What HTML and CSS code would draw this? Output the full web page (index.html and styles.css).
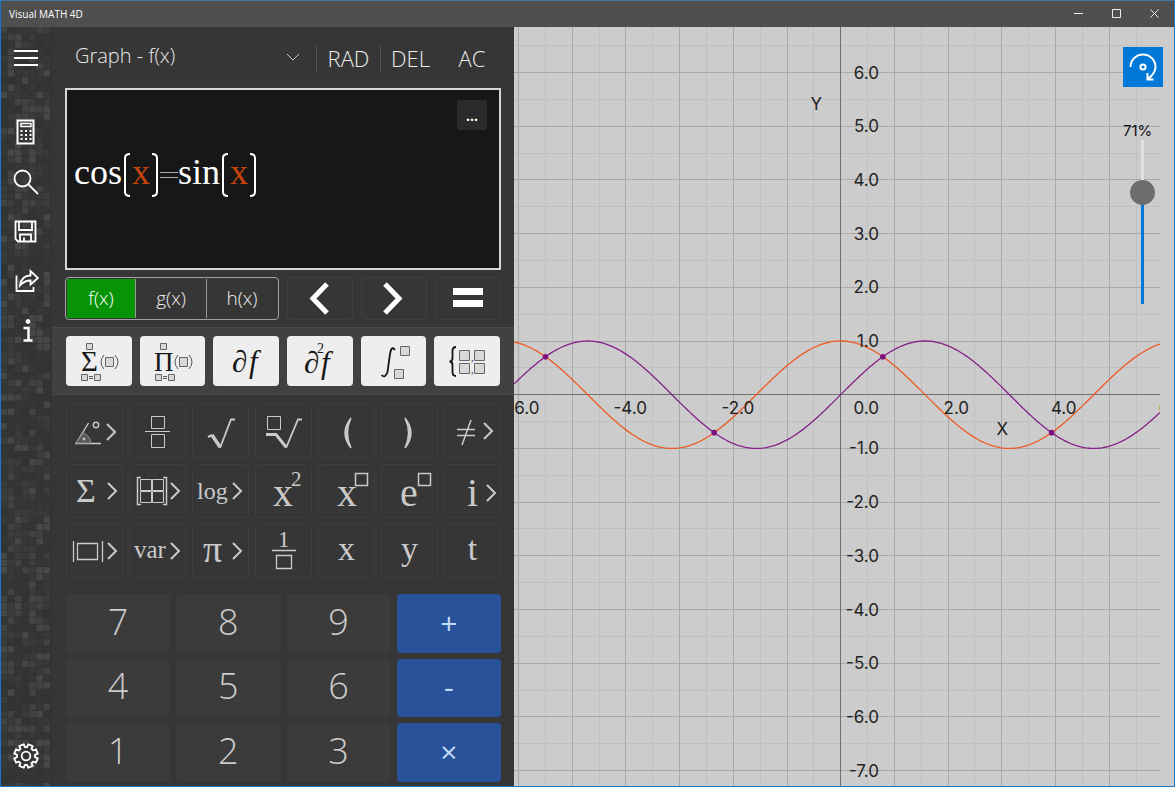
FILE: index.html
```html
<!DOCTYPE html>
<html lang="en">

<head>
    <meta charset="UTF-8">
    <meta name="viewport" content="width=device-width, initial-scale=1.0">
    <title>Visual MATH 4D</title>
    <link rel="stylesheet" href="styles.css">
</head>

<body>
    <header class="titlebar">
        <span class="title">Visual MATH 4D</span>
        <button class="winButton" aria-label="Minimize"><svg width="12" height="12"><path d="M1 5.500H10" /></svg></button>
        <button class="winButton" aria-label="Maximize"><svg width="12" height="12"><path d="M1.500 1.500H9.500V9.500H1.500Z" /></svg></button>
        <button class="winButton" aria-label="Close"><svg width="12" height="12"><path d="M1.500 1.500L9.500 9.500M9.500 1.500L1.500 9.500" /></svg></button>
    </header>

    <div class="window">
        <nav class="sidebar">
            <svg class="mosaic" id="mosaic" aria-hidden="true"></svg>
            <button class="sideButton menuButton" aria-label="Menu">
                <svg width="26" height="26"><path d="M1 6H25M1 13H25M1 20H25" stroke-width="2" /></svg>
            </button>
            <button class="sideButton" aria-label="Calculator">
                <svg width="26" height="26">
                    <path d="M4.500 1.500H20.500V24.500H4.500Z" stroke-width="2" />
                    <path d="M8 4.500H18V7.500H8Z" stroke-width="1.500" />
                    <path d="M7.500 12H18.500M7.500 16H18.500M7.500 20H18.500" stroke-width="2" stroke-dasharray="2 2.500" />
                </svg>
            </button>
            <button class="sideButton" aria-label="Search">
                <svg width="26" height="26"><circle cx="9.500" cy="9.500" r="8" stroke-width="1.800" /><path d="M15.500 15.500L25 25" stroke-width="1.800" /></svg>
            </button>
            <button class="sideButton" aria-label="Save">
                <svg width="26" height="26">
                    <path d="M2.500 2.500H22.500V22.500H5L2.500 20Z" stroke-width="1.800" />
                    <path d="M6 3V11H19V3M7 22V15.500H18V22M11 22V18.500" stroke-width="1.800" />
                </svg>
            </button>
            <button class="sideButton" aria-label="Share">
                <svg width="26" height="26">
                    <path d="M3.500 6.500V22H20.500V18" stroke-width="1.800" />
                    <path d="M7 16.500C8 10 12 6.500 17.500 6.500V2L25 9L17.500 15.500V11.500C13 11.500 10 13 7 16.500Z" stroke-width="1.800" />
                </svg>
            </button>
            <button class="sideButton" aria-label="Info">
                <svg width="26" height="26"><circle class="solid" cx="15" cy="2.500" r="2" /><path d="M10.500 9H15.500V21M10.500 21.500H19.500" stroke-width="2.500" /></svg>
            </button>
            <button class="sideButton settingsButton" aria-label="Settings">
                <svg width="26" height="26"><circle cx="13" cy="13" r="4.300" stroke-width="1.800" /><path id="gearPath" stroke-width="1.800" stroke-linejoin="round" /></svg>
            </button>
        </nav>

        <main class="panel">
            <div class="toolbar">
                <div class="modeBox">
                    <select class="mode" aria-label="Mode">
                        <option>Graph - f(x)</option>
                    </select>
                    <svg class="modeArrow" width="14" height="8"><path d="M1 1L7 7L13 1" /></svg>
                </div>
                <button class="toolButton">RAD</button>
                <button class="toolButton">DEL</button>
                <button class="toolButton plain">AC</button>
            </div>

            <section class="editor">
                <div class="formula">
                    <span>cos</span><svg class="bracket" width="6" height="44"><path d="M6 1Q1 1 1 5V39Q1 43 6 43" /></svg><span class="variable">x</span><svg class="bracket" width="6" height="44"><path d="M0 1Q5 1 5 5V39Q5 43 0 43" /></svg><svg class="equals" width="18" height="8"><path d="M0 1.500H18M0 6.500H18" /></svg><span>sin</span><svg class="bracket" width="6" height="44"><path d="M6 1Q1 1 1 5V39Q1 43 6 43" /></svg><span class="variable">x</span><svg class="bracket" width="6" height="44"><path d="M0 1Q5 1 5 5V39Q5 43 0 43" /></svg>
                </div>
                <button class="moreButton">...</button>
            </section>

            <div class="functions">
                <div class="tabs">
                    <button class="tab active">f(x)</button>
                    <button class="tab">g(x)</button>
                    <button class="tab">h(x)</button>
                </div>
                <button class="navButton" aria-label="Left"><svg width="68" height="42"><path d="M41 6L27 20.500L41 35" /></svg></button>
                <button class="navButton" aria-label="Right"><svg width="68" height="42"><path d="M25 6L39 20.500L25 35" /></svg></button>
                <button class="navButton" aria-label="Equals"><svg width="68" height="42"><path d="M19 13.500H49M19 25.500H49" stroke-width="7" /></svg></button>
            </div>

            <div class="operators">
                <button class="opKey" aria-label="Sum">
                    <svg width="66" height="50">
                        <path class="box" d="M20.500 7.500H26.500V13.500H20.500ZM39.500 21.500H47.500V30.500H39.500ZM15.500 38.500H21.500V44.500H15.500ZM28.500 38.500H34.500V44.500H28.500Z" />
                        <text x="15" y="35" font-size="29">Σ</text>
                        <path d="M38 19Q32 26 38 33M49 19Q55 26 49 33M23 40.500H27M23 42.500H27" stroke="#555" />
                    </svg>
                </button>
                <button class="opKey" aria-label="Product">
                    <svg width="66" height="50">
                        <path class="box" d="M20.500 7.500H26.500V13.500H20.500ZM39.500 21.500H47.500V30.500H39.500ZM15.500 38.500H21.500V44.500H15.500ZM28.500 38.500H34.500V44.500H28.500Z" />
                        <text x="14" y="35" font-size="27">Π</text>
                        <path d="M38 19Q32 26 38 33M49 19Q55 26 49 33M23 40.500H27M23 42.500H27" stroke="#555" />
                    </svg>
                </button>
                <button class="opKey" aria-label="Derivative">
                    <svg width="66" height="50"><text x="19" y="36" font-size="31">∂</text><text class="italic" x="36" y="36" font-size="31">f</text></svg>
                </button>
                <button class="opKey" aria-label="Second derivative">
                    <svg width="66" height="50"><text x="17" y="37" font-size="31">∂</text><text class="italic" x="34" y="37" font-size="31">f</text><text x="30" y="17" font-size="14">2</text></svg>
                </button>
                <button class="opKey" aria-label="Integral">
                    <svg width="66" height="50">
                        <path d="M20.500 39Q24 43 26.500 36L29 18Q30.500 9 34 14" stroke-width="1.800" />
                        <path class="box" d="M39.500 10.500H48.500V19.500H39.500ZM33.500 33.500H42.500V42.500H33.500Z" />
                    </svg>
                </button>
                <button class="opKey" aria-label="Equation system">
                    <svg width="66" height="50">
                        <path d="M22 11Q18.500 11 18.500 15V22Q18.500 25.500 15.500 25.500Q18.500 25.500 18.500 29V36Q18.500 40 22 40" stroke-width="1.800" />
                        <path class="box" d="M25.500 14.500H35.500V24.500H25.500ZM40.500 14.500H50.500V24.500H40.500ZM25.500 27.500H35.500V37.500H25.500ZM40.500 27.500H50.500V37.500H40.500Z" />
                        <text x="37" y="25" font-size="10">,</text>
                        <text x="37" y="37" font-size="10">,</text>
                    </svg>
                </button>
            </div>

            <div class="mathKeys">
                <button class="mathKey" aria-label="Trigonometry">
                    <svg width="56" height="52"><path d="M34 38.500H9L21.500 18" stroke-width="1.400" /><path class="arc" d="M9 38L16 28Q23 30 24 38Z" /><circle class="solid" cx="17" cy="34" r="1" /><circle cx="29" cy="20" r="2.700" stroke-width="1.400" /><path class="more" d="M40 19L48 27L40 35" /></svg>
                </button>
                <button class="mathKey" aria-label="Fraction">
                    <svg width="56" height="52"><path d="M21.500 11.500H34.500V23.500H21.500ZM15 26.500H40M21.500 29.500H34.500V42.500H21.500Z" /></svg>
                </button>
                <button class="mathKey" aria-label="Square root">
                    <svg width="56" height="52"><path d="M15 32L19 30" stroke-width="2" /><path d="M19 30L27 42" stroke-width="3.500" /><path d="M27 43L38 14.500H42" stroke-width="1.800" /></svg>
                </button>
                <button class="mathKey" aria-label="Nth root">
                    <svg width="56" height="52"><path d="M11.500 11.500H24.500V24.500H11.500Z" /><path d="M10 29.500H20L30 42" stroke-width="3" /><path d="M30 43L42 14.500H46" stroke-width="1.800" /></svg>
                </button>
                <button class="mathKey" aria-label="Open bracket"><svg width="56" height="52"><path d="M32 13Q20 28 32 43Q25 28 32 13Z" class="solid" stroke-width="1.400" /></svg></button>
                <button class="mathKey" aria-label="Close bracket"><svg width="56" height="52"><path d="M23 13Q35 28 23 43Q30 28 23 13Z" class="solid" stroke-width="1.400" /></svg></button>
                <button class="mathKey" aria-label="Relations">
                    <svg width="56" height="52"><path d="M12 24.500H30M12 30.500H30M26 15L17 40" stroke-width="1.500" /><path class="more" d="M39 18L47 26L39 34" /></svg>
                </button>

                <button class="mathKey"><svg width="56" height="52"><text x="9" y="37" font-size="34">Σ</text><path class="more" d="M41 18L49 26L41 34" /></svg></button>
                <button class="mathKey" aria-label="Matrix">
                    <svg width="56" height="52"><path d="M11 12.500H7.500V39.500H11M33 12.500H36.500V39.500H33" stroke-width="1.500" /><path d="M10.500 14.500H21.500V25.500H10.500ZM22.500 14.500H33.500V25.500H22.500ZM10.500 26.500H21.500V37.500H10.500ZM22.500 26.500H33.500V37.500H22.500Z" /><path class="more" d="M41 18L49 26L41 34" /></svg>
                </button>
                <button class="mathKey"><svg width="56" height="52"><text x="4" y="34" font-size="24">log</text><path class="more" d="M40 18L48 26L40 34" /></svg></button>
                <button class="mathKey"><svg width="56" height="52"><text x="17" y="41" font-size="40">x</text><text x="35" y="21" font-size="21">2</text></svg></button>
                <button class="mathKey"><svg width="56" height="52"><text x="18" y="41" font-size="40">x</text><path d="M36.500 8.500H48.500V20.500H36.500Z" stroke-width="1.500" /></svg></button>
                <button class="mathKey"><svg width="56" height="52"><text x="18" y="41" font-size="40">e</text><path d="M36.500 8.500H48.500V20.500H36.500Z" stroke-width="1.500" /></svg></button>
                <button class="mathKey"><svg width="56" height="52"><text x="22" y="41" font-size="40">i</text><path class="more" d="M42 20L50 28L42 36" /></svg></button>

                <button class="mathKey" aria-label="Absolute value">
                    <svg width="56" height="52"><path d="M6.500 16V37M35.500 16V37M10.500 18.500H30.500V34.500H10.500Z" stroke-width="1.300" /><path class="more" d="M41 18L49 26L41 34" /></svg>
                </button>
                <button class="mathKey"><svg width="56" height="52"><text x="4" y="33" font-size="25">var</text><path class="more" d="M41 18L49 26L41 34" /></svg></button>
                <button class="mathKey"><svg width="56" height="52"><text x="10" y="37" font-size="38">π</text><path class="more" d="M40 18L48 26L40 34" /></svg></button>
                <button class="mathKey"><svg width="56" height="52"><text x="22" y="22" font-size="23">1</text><path d="M16 25.500H40M20.500 30.500H35.500V43.500H20.500Z" stroke-width="1.300" /></svg></button>
                <button class="mathKey">x</button>
                <button class="mathKey">y</button>
                <button class="mathKey">t</button>
            </div>

            <div class="numbers">
                <button class="number">7</button>
                <button class="number">8</button>
                <button class="number">9</button>
                <button class="number sign">+</button>
                <button class="number">4</button>
                <button class="number">5</button>
                <button class="number">6</button>
                <button class="number sign">-</button>
                <button class="number">1</button>
                <button class="number">2</button>
                <button class="number">3</button>
                <button class="number sign">×</button>
            </div>
        </main>

        <section class="graph">
            <svg class="plot" id="plot"></svg>
            <div class="viewTools">
                <button class="rotateButton" aria-label="Rotate">
                    <svg width="28" height="28"><path d="M1.500 14A12.500 12.500 0 0 1 26.500 14Q26.500 20 19 26M18.500 20V26.500H24.500" /><circle cx="14" cy="14" r="2.600" /></svg>
                </button>
                <label class="zoomLabel" for="zoom">71%</label>
                <input class="zoom" id="zoom" type="range" min="0" max="100" value="71">
            </div>
        </section>
    </div>

    <script src="script.js"></script>
</body>

</html>
```
FILE: styles.css
```css
* {
    box-sizing: border-box;
}

html,
body {
    height: 100%;
}

body {
    margin: 0;
    display: flex;
    flex-direction: column;
    border: 1px solid #1a78c8;
    border-top-color: #41749f;
    background: #363636;
    color: #eee;
    font-family: "Open Sans", sans-serif;
    overflow: hidden;
}

button {
    display: flex;
    align-items: center;
    justify-content: center;
    padding: 0;
    border: none;
    background: none;
    color: inherit;
    font-family: inherit;
}

svg {
    display: block;
    flex: none;
    fill: none;
    stroke: currentColor;
}

svg text {
    fill: currentColor;
    stroke: none;
    font-family: "Liberation Serif", serif;
}

svg .solid {
    fill: currentColor;
}

/* title bar */
.titlebar {
    display: flex;
    flex: none;
    height: 26px;
    background: #4f4f4f;
}

.title {
    flex: 1;
    padding-left: 8px;
    font-size: 10px;
    line-height: 26px;
    color: #fff;
}

.winButton {
    width: 38px;
}

.window {
    flex: 1;
    min-height: 0;
    display: flex;
}

/* left bar */
.sidebar {
    position: relative;
    display: flex;
    flex-direction: column;
    flex: none;
    width: 51px;
    padding: 6px 2px 5px 0;
    background: #333;
    color: #fff;
}

.mosaic {
    position: absolute;
    top: 0;
    left: 0;
    width: 100%;
    height: 100%;
    stroke: none;
}

.sideButton {
    position: relative;
    height: 50px;
}

.menuButton {
    margin-bottom: 24px;
}

.settingsButton {
    margin-top: auto;
}

/* calculator */
.panel {
    display: flex;
    flex-direction: column;
    flex: none;
    width: 462px;
    padding-bottom: 4px;
    background: #363636;
}

.toolbar {
    display: flex;
    align-items: center;
    height: 62px;
    padding: 0 14px;
}

.modeBox {
    position: relative;
    flex: 1;
}

.mode {
    appearance: none;
    width: 100%;
    height: 40px;
    padding: 0 9px 6px;
    border: none;
    background: none;
    color: #e8e8e8;
    font-family: "Open Sans", sans-serif;
    font-size: 20px;
    font-weight: 300;
}

.modeArrow {
    position: absolute;
    top: 15px;
    right: 16px;
    stroke: #ccc;
}

.toolButton {
    width: 64px;
    height: 25px;
    border-left: 1px solid #555;
    font-size: 22px;
    font-weight: 300;
}

.toolButton:nth-of-type(2) {
    padding-right: 4px;
}

.toolButton.plain {
    width: 56px;
    border-left: none;
}

.editor {
    position: relative;
    display: flex;
    align-items: center;
    height: 182px;
    margin: -1px 13px 0 13px;
    padding-left: 7px;
    border: 2px solid #d4d8d5;
    background: #171717;
}

.formula {
    display: flex;
    align-items: center;
    color: #fff;
    font-family: "Liberation Serif", serif;
    font-size: 36px;
    line-height: 40px;
    padding-bottom: 14px;
}

.formula .variable {
    color: #c8440c;
}

.formula .bracket {
    margin: 6px 2px 0;
    stroke-width: 2;
}

.formula .equals {
    margin-top: 6px;
    stroke: #aaa;
}

.moreButton {
    position: absolute;
    top: 10px;
    right: 12px;
    width: 30px;
    height: 30px;
    border-radius: 2px;
    background: #2b2b2b;
    font-size: 14px;
    font-weight: 700;
    color: #fff;
}

.functions {
    display: grid;
    grid-template-columns: repeat(6, 1fr);
    column-gap: 8px;
    height: 43px;
    margin: 7px 13px;
}

.tabs {
    grid-column: span 3;
    display: grid;
    grid-template-columns: 68px 1fr 1fr;
    padding: 1px;
    border: 1px solid #a0a0a0;
    border-radius: 4px;
}

.tab {
    padding-bottom: 2px;
    border-left: 1px solid #999;
    font-size: 19px;
    font-weight: 300;
}

.tab.active {
    border-left: none;
    background: #069306;
    color: #fff;
}

.navButton {
    border: 1px solid #404040;
    border-radius: 4px;
    color: #fff;
    stroke-width: 5;
    overflow: hidden;
}

.operators {
    display: grid;
    grid-template-columns: repeat(6, 1fr);
    column-gap: 8px;
    height: 68px;
    padding: 8px 14px;
    border-top: 1px solid #494949;
    border-bottom: 1px solid #4b4b4b;
    background: #414141;
}

.opKey {
    border-radius: 4px;
    background: #eee;
    color: #161616;
    overflow: hidden;
}

.opKey .box {
    fill: #d8d8d8;
    stroke: #666;
}

.opKey .italic {
    font-style: italic;
}

.mathKeys {
    display: grid;
    grid-template-columns: repeat(7, 1fr);
    gap: 6px;
    margin: 9px 13px 16px 14px;
}

.mathKey {
    height: 54px;
    padding-bottom: 4px;
    border: 1px solid #3e3e3e;
    border-radius: 4px;
    color: #cacaca;
    font-family: "Liberation Serif", serif;
    font-size: 34px;
    overflow: hidden;
}

.mathKey svg {
    margin-bottom: -4px;
}

.mathKey .more {
    stroke-width: 2;
}

.mathKey .arc {
    fill: #5a5a5a;
    stroke: #888;
}

.numbers {
    flex: 1;
    min-height: 0;
    display: grid;
    grid-template-columns: repeat(4, 1fr);
    grid-auto-rows: 1fr;
    gap: 6px;
    padding: 0 13px 0 14px;
}

.number {
    padding-bottom: 4px;
    border-radius: 4px;
    background: #3b3b3b;
    color: #ccc;
    font-size: 36px;
    font-weight: 300;
}

.number.sign {
    padding-bottom: 2px;
    background: #28529a;
    color: #c3daf8;
    font-size: 30px;
    font-weight: 400;
}

/* graph */
.graph {
    position: relative;
    flex: 1;
    min-width: 0;
    padding-right: 14px;
    background: #ccc;
}

.plot {
    width: 100%;
    height: 100%;
}

.plot text {
    fill: #222;
    font-family: Inter, sans-serif;
    font-size: 17px;
}

.plot .minor {
    stroke: #c0c0c0;
}

.plot .major {
    stroke: #a9a9a9;
}

.plot .axis {
    stroke: #707070;
}

.plot .cos {
    stroke: #ee5a22;
    stroke-width: 1.3;
}

.plot .sin {
    stroke: #85208a;
    stroke-width: 1.3;
}

.plot .cross {
    fill: #7d1080;
    stroke: none;
}

.viewTools {
    position: absolute;
    top: 20px;
    right: 11px;
    display: flex;
    flex-direction: column;
    align-items: flex-end;
}

.rotateButton {
    width: 40px;
    height: 40px;
    background: #0078d7;
    color: #fff;
    stroke-width: 2;
}

.zoomLabel {
    width: 40px;
    margin-top: 35px;
    color: #111;
    font-family: Inter, sans-serif;
    font-size: 15px;
    line-height: 18px;
}

.zoom {
    appearance: none;
    writing-mode: vertical-lr;
    direction: rtl;
    width: 25px;
    height: 164px;
    margin: 0 8px 0 0;
    background: none;
}

.zoom::-webkit-slider-runnable-track {
    width: 3px;
    height: 100%;
    background: linear-gradient(to top, #0078d7 69%, #e0e0e0 69%);
}

.zoom::-webkit-slider-thumb {
    appearance: none;
    width: 25px;
    height: 25px;
    margin-left: -11px;
    border-radius: 50%;
    background: #6c6c6c;
}
```
FILE: script.js
```js
var UNIT = 53.7;
var ORIGIN_X = 326.7;
var ORIGIN_Y = 367.7;

function line(x1, y1, x2, y2, name) {
    return '<path class="' + name + '" d="M' + x1 + ' ' + y1 + 'L' + x2 + ' ' + y2 + '"/>';
}

function label(x, y, text) {
    return '<text x="' + x + '" y="' + y + '" text-anchor="end">' + text + '</text>';
}

// crisp 1px lines
function snap(value) {
    return Math.floor(value) + 0.5;
}

function curve(fn, width, name) {
    var d = "";
    for (let x = 0; x <= width; x += 2) {
        var y = ORIGIN_Y - fn((x - ORIGIN_X) / UNIT) * UNIT;
        d += (x == 0 ? "M" : "L") + x + " " + y.toFixed(2);
    }
    return '<path class="' + name + '" d="' + d + '"/>';
}

function drawPlot() {
    var plot = document.getElementById("plot");
    var box = plot.getBoundingClientRect();
    var w = box.width;
    var h = box.height;
    var out = "";

    ["minor", "major"].forEach(function (name) {
        var start = name == "minor" ? 0.5 : 0;
        for (let i = -60; i < 60; i++) {
            var x = ORIGIN_X + (i + start) * UNIT;
            var y = ORIGIN_Y + (i + start) * UNIT;
            if (x > 0 && x < w) out += line(snap(x), 0, snap(x), h, name);
            if (y > 0 && y < h) out += line(0, snap(y), w, snap(y), name);
        }
    });
    out += line(snap(ORIGIN_X), 0, snap(ORIGIN_X), h, "axis");
    out += line(0, snap(ORIGIN_Y), w, snap(ORIGIN_Y), "axis");

    out += curve(Math.cos, w, "cos");
    out += curve(Math.sin, w, "sin");
    for (let n = -8; n < 20; n++) {
        var t = Math.PI / 4 + n * Math.PI;
        var cx = ORIGIN_X + t * UNIT;
        if (cx > 0 && cx < w) out += '<circle class="cross" r="2.8" cx="' + cx + '" cy="' + (ORIGIN_Y - Math.sin(t) * UNIT) + '"/>';
    }

    for (let i = -20; i <= 20; i++) {
        var ty = ORIGIN_Y - i * UNIT;
        if (i != 0 && ty > 20 && ty < h) out += label(365, ty + 6, i.toFixed(1));
        var tx = ORIGIN_X + i * UNIT;
        if (i % 2 == 0 && tx > -20 && tx < w + 20) out += label(i == 0 ? 365 : tx + 21, ORIGIN_Y + 19, i.toFixed(1));
    }
    out += label(494, 408, "X");
    out += label(308, 83, "Y");

    plot.innerHTML = out;
}

// background tiles of the left bar
function drawMosaic() {
    var seed = 7;
    var out = "";
    var shades = ["#333", "#363636", "#393939", "#3c3c3c", "#363636", "#424242", "#343434", "#474747"];
    var rows = Math.ceil(window.innerHeight / 7.2);
    for (let r = 0; r < rows; r++) {
        for (let c = 0; c < 7; c++) {
            seed = (seed * 16807) % 2147483647;
            out += '<rect x="' + (c * 7.2 - 0.5) + '" y="' + r * 7.2 + '" width="6.4" height="6.4" fill="' + shades[(seed >> 9) % 8] + '"/>';
        }
    }
    document.getElementById("mosaic").innerHTML = out;
}

function drawGear() {
    var d = "";
    var teeth = 8;
    for (let i = 0; i < teeth; i++) {
        [[-0.27, 9], [-0.2, 12], [0.2, 12], [0.27, 9]].forEach(function (p) {
            var a = (i + 0.5) * 2 * Math.PI / teeth + p[0];
            d += (d == "" ? "M" : "L") + (13 + Math.cos(a) * p[1]).toFixed(2) + " " + (13 + Math.sin(a) * p[1]).toFixed(2);
        });
    }
    document.getElementById("gearPath").setAttribute("d", d + "Z");
}

drawMosaic();
drawGear();
drawPlot();
window.addEventListener("resize", drawPlot);
```
